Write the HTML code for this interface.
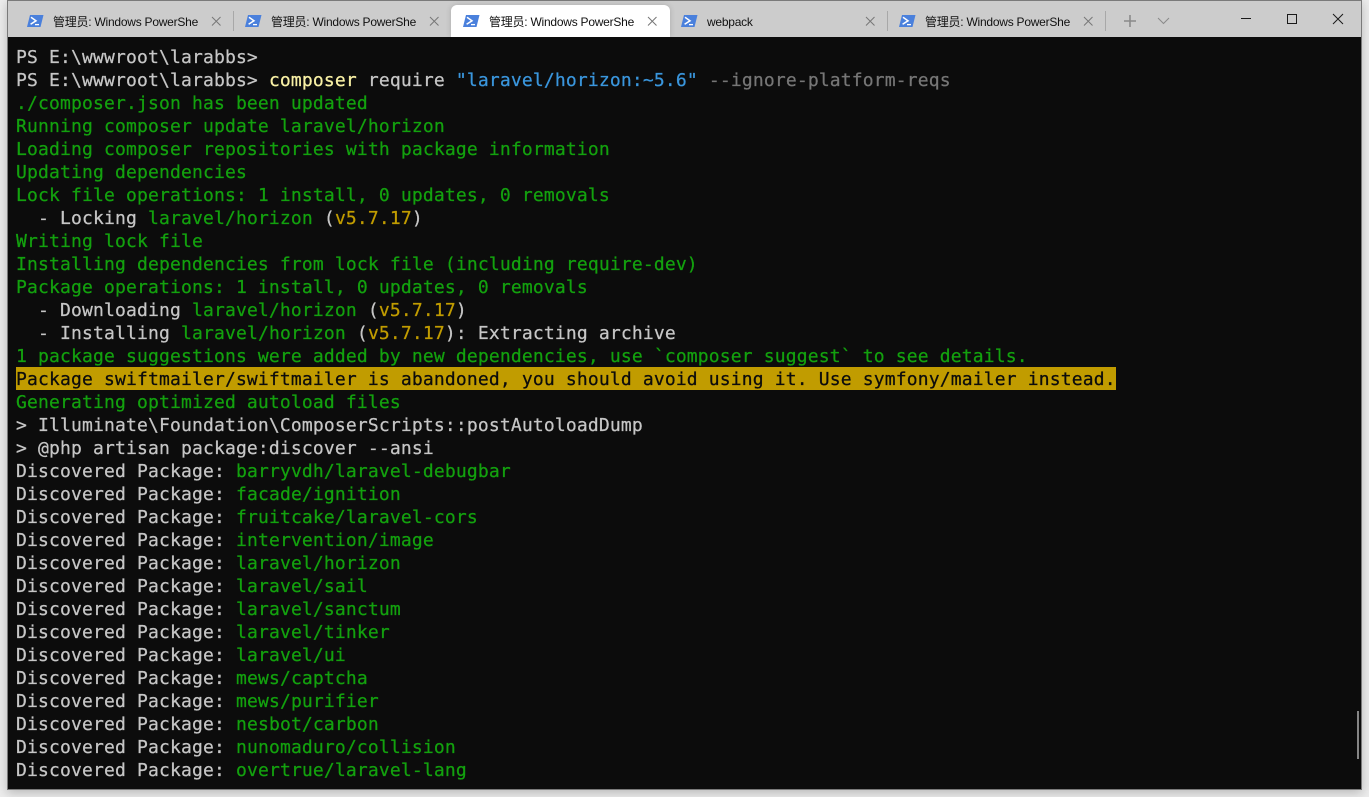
<!DOCTYPE html>
<html>
<head>
<meta charset="utf-8">
<style>
html,body{margin:0;padding:0;width:1369px;height:797px;overflow:hidden;background:#ececec}
#win{position:absolute;left:7px;top:0;width:1353px;height:788px;background:#0c0c0c;border:1px solid #7a7a7a;box-shadow:0 3px 10px rgba(0,0,0,.22)}
#bar{position:absolute;left:8px;top:1px;width:1353px;height:36px;background:#cccccc}
#active{position:absolute;left:451px;top:5px;width:219px;height:32px;background:#fff;border-radius:6px 6px 0 0;box-shadow:0 0 6px rgba(0,0,0,.16);clip-path:inset(-10px -10px 0 -10px)}
.t{position:absolute;top:14px;font:12px/16px "Liberation Sans","Noto Sans CJK SC",sans-serif;letter-spacing:-.24px;color:#111;white-space:pre}
.sep{position:absolute;top:11px;width:1px;height:20px;background:#a8a8a8}
svg{position:absolute;overflow:visible;width:20px;height:20px}
#term{position:absolute;left:16px;top:45px;font:18px/25px "DejaVu Sans Mono","Liberation Mono",monospace;letter-spacing:.16px;color:#c6c6c6;white-space:pre;-webkit-text-stroke:.25px}
.l{height:23px}
.g{color:#13a10e}.y{color:#c19c00}.c{color:#f9f1a5}.b{color:#3a96dd}.d{color:#767676}
.w{background:#c19c00;color:#0c0c0c;display:block;width:1100px;height:23px}
#sb{position:absolute;left:1357px;top:711px;width:2px;height:48px;background:#858585}
</style>
</head>
<body>
<div id="win"></div>
<div id="bar"></div>
<div id="active"></div>

<svg style="left:27px;top:15px"><g id="i"><path d="M3 0H16.5L13.5 12H0Z" fill="#4a80dc"/><path d="M4 2.3L9 5.8L3.6 9.2" fill="none" stroke="#fff" stroke-width="1.5"/><path d="M8 9.6H12" stroke="#fff" stroke-width="1.3"/></g></svg>
<svg style="left:245px;top:15px"><use href="#i"/></svg>
<svg style="left:463px;top:15px"><use href="#i"/></svg>
<svg style="left:681px;top:15px"><use href="#i"/></svg>
<svg style="left:899px;top:15px"><use href="#i"/></svg>

<div class="t" style="left:53px">管理员: Windows PowerShe</div>
<div class="t" style="left:271px">管理员: Windows PowerShe</div>
<div class="t" style="left:489px">管理员: Windows PowerShe</div>
<div class="t" style="left:707px">webpack</div>
<div class="t" style="left:925px">管理员: Windows PowerShe</div>

<svg style="left:212px;top:17px"><path id="x" d="M0 0L8.5 8.5M8.5 0L0 8.5" stroke="#777" stroke-width="1" fill="none"/></svg>
<svg style="left:430px;top:17px"><use href="#x"/></svg>
<svg style="left:648px;top:17px"><use href="#x"/></svg>
<svg style="left:866px;top:17px"><use href="#x"/></svg>
<svg style="left:1084px;top:17px"><use href="#x"/></svg>

<div class="sep" style="left:233px"></div>
<div class="sep" style="left:887px"></div>
<div class="sep" style="left:1105px"></div>

<svg style="left:1124px;top:15px"><path d="M6 0V12M0 6H12" stroke="#8a8a8a" stroke-width="1.6" fill="none"/></svg>
<svg style="left:1158px;top:18px"><path d="M0 0L5.5 5.5L11 0" stroke="#8a8a8a" stroke-width="1" fill="none"/></svg>
<svg style="left:1241px;top:18px"><path d="M0 .5H10" stroke="#1a1a1a" stroke-width="1" fill="none"/></svg>
<svg style="left:1287px;top:14px"><rect x=".5" y=".5" width="9" height="9" stroke="#1a1a1a" stroke-width="1" fill="none"/></svg>
<svg style="left:1333px;top:14px"><path d="M0 0L10 10M10 0L0 10" stroke="#1a1a1a" stroke-width="1" fill="none"/></svg>

<div id="term"><div class="l">PS E:\wwwroot\larabbs&gt;</div><div class="l">PS E:\wwwroot\larabbs&gt; <span class="c">composer</span> require <span class="b">"laravel/horizon:~5.6"</span> <span class="d">--ignore-platform-reqs</span></div><div class="l g">./composer.json has been updated</div><div class="l g">Running composer update laravel/horizon</div><div class="l g">Loading composer repositories with package information</div><div class="l g">Updating dependencies</div><div class="l g">Lock file operations: 1 install, 0 updates, 0 removals</div><div class="l">  - Locking <span class="g">laravel/horizon</span> (<span class="y">v5.7.17</span>)</div><div class="l g">Writing lock file</div><div class="l g">Installing dependencies from lock file (including require-dev)</div><div class="l g">Package operations: 1 install, 0 updates, 0 removals</div><div class="l">  - Downloading <span class="g">laravel/horizon</span> (<span class="y">v5.7.17</span>)</div><div class="l">  - Installing <span class="g">laravel/horizon</span> (<span class="y">v5.7.17</span>): Extracting archive</div><div class="l g">1 package suggestions were added by new dependencies, use `composer suggest` to see details.</div><div class="l"><span class="w">Package swiftmailer/swiftmailer is abandoned, you should avoid using it. Use symfony/mailer instead.</span></div><div class="l g">Generating optimized autoload files</div><div class="l">&gt; Illuminate\Foundation\ComposerScripts::postAutoloadDump</div><div class="l">&gt; @php artisan package:discover --ansi</div><div class="l">Discovered Package: <span class="g">barryvdh/laravel-debugbar</span></div><div class="l">Discovered Package: <span class="g">facade/ignition</span></div><div class="l">Discovered Package: <span class="g">fruitcake/laravel-cors</span></div><div class="l">Discovered Package: <span class="g">intervention/image</span></div><div class="l">Discovered Package: <span class="g">laravel/horizon</span></div><div class="l">Discovered Package: <span class="g">laravel/sail</span></div><div class="l">Discovered Package: <span class="g">laravel/sanctum</span></div><div class="l">Discovered Package: <span class="g">laravel/tinker</span></div><div class="l">Discovered Package: <span class="g">laravel/ui</span></div><div class="l">Discovered Package: <span class="g">mews/captcha</span></div><div class="l">Discovered Package: <span class="g">mews/purifier</span></div><div class="l">Discovered Package: <span class="g">nesbot/carbon</span></div><div class="l">Discovered Package: <span class="g">nunomaduro/collision</span></div><div class="l">Discovered Package: <span class="g">overtrue/laravel-lang</span></div></div>
<div id="sb"></div>
</body>
</html>
